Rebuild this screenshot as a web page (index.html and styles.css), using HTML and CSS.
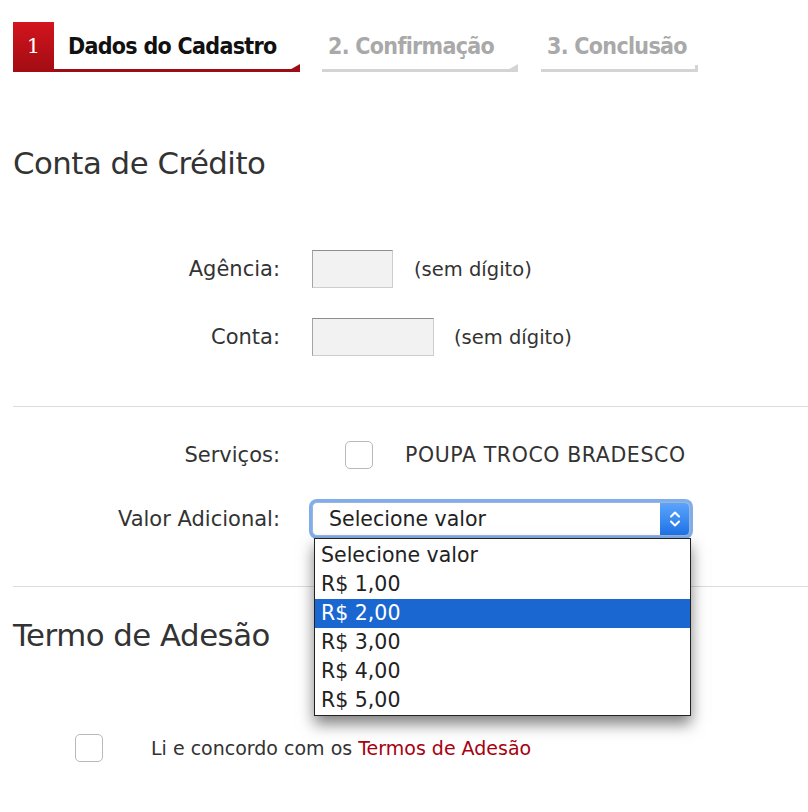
FILE: index.html
```html
<!DOCTYPE html>
<html lang="pt-BR">
<head>
    <meta charset="UTF-8">
    <title>Cadastro - Conta de Crédito</title>
    <link rel="stylesheet" href="styles.css">
</head>
<body>

<div class="steps">
    <div class="step active">
        <span class="step-num">1</span>
        <span class="step-label">Dados do Cadastro</span>
    </div>
    <div class="step second">
        <span class="step-label">2. Confirmação</span>
    </div>
    <div class="step last">
        <span class="step-label">3. Conclusão</span>
    </div>
</div>

<h2 class="section-title first">Conta de Crédito</h2>

<div class="form-block account">
    <div class="row">
        <label class="row-label">Agência:</label>
        <div class="field field-agencia"></div>
        <span class="hint">(sem dígito)</span>
    </div>
    <div class="row">
        <label class="row-label">Conta:</label>
        <div class="field field-conta"></div>
        <span class="hint">(sem dígito)</span>
    </div>
</div>

<hr class="divider">

<div class="form-block services">
    <div class="row">
        <label class="row-label">Serviços:</label>
        <span class="checkbox check-servico"></span>
        <span class="service-name">POUPA TROCO BRADESCO</span>
    </div>
    <div class="row">
        <label class="row-label">Valor Adicional:</label>
        <div class="select-wrap">
            <div class="select">
                <span>Selecione valor</span>
                <span class="select-arrow">
                    <svg width="14" height="22" viewBox="0 0 14 22"><path d="M3 8.5 L7 4.5 L11 8.5 M3 13.5 L7 17.5 L11 13.5" fill="none" stroke="#fff" stroke-width="2" stroke-linecap="round" stroke-linejoin="round"/></svg>
                </span>
            </div>
            <ul class="dropdown">
                <li>Selecione valor</li>
                <li>R$ 1,00</li>
                <li class="selected">R$ 2,00</li>
                <li>R$ 3,00</li>
                <li>R$ 4,00</li>
                <li>R$ 5,00</li>
            </ul>
        </div>
    </div>
</div>

<hr class="divider">

<h2 class="section-title second">Termo de Adesão</h2>

<div class="terms">
    <span class="checkbox"></span>
    <span class="terms-text">Li e concordo com os <a href="#">Termos de Adesão</a></span>
</div>

</body>
</html>
```

FILE: styles.css
```css
body {
    font-family: "DejaVu Sans", Verdana, sans-serif;
    color: #333;
    margin: 0;
    padding: 0 0 0 13px;
    overflow: hidden;
}

/* wizard steps */
.steps {
    display: flex;
    padding-top: 22px;
    height: 50px;
}
.step {
    display: flex;
    align-items: stretch;
}
.step.second {
    margin-left: 22px;
}
.step.last {
    margin-left: 23px;
}
.step-num {
    width: 41px;
    background: linear-gradient(#d3141d, #a20c13);
    color: #fff;
    font-family: "DejaVu Serif", serif;
    font-size: 21px;
    display: flex;
    align-items: center;
    justify-content: center;
    padding-bottom: 2px;
    box-sizing: border-box;
}
.step-label {
    font-family: "DejaVu Sans Condensed", "DejaVu Sans", sans-serif;
    font-weight: bold;
    font-size: 23px;
    letter-spacing: -0.7px;
    color: #a9a9a9;
    box-sizing: border-box;
    padding: 11px 0 0 6px;
    border-bottom: 3px solid #d4d4d4;
    position: relative;
    white-space: nowrap;
}
.step-label::after {
    content: "";
    position: absolute;
    right: 0;
    bottom: -3px;
    border-left: 14px solid transparent;
    border-bottom: 8px solid #d4d4d4;
}
.step.active .step-label {
    width: 246px;
    color: #111;
    padding-left: 14px;
    border-bottom-color: #9c0d16;
}
.step.active .step-label::after {
    border-bottom-color: #9c0d16;
}
.step.second .step-label {
    width: 196px;
}
.step.last .step-label {
    width: 157px;
}
.step.last .step-label::after {
    border-left: 3px solid #d4d4d4;
    border-bottom: 7px solid #d4d4d4;
}

/* section headings */
.section-title {
    font-weight: normal;
    font-size: 30.8px;
    line-height: 36px;
    letter-spacing: -0.5px;
    color: #333;
    margin: 0;
}
.section-title.first {
    margin-top: 73px;
}
.section-title.second {
    margin-top: 30px;
}

/* form rows */
.form-block {
    display: flex;
    flex-direction: column;
}
.form-block.account {
    gap: 30px;
    padding: 69px 0 50px;
}
.form-block.services {
    gap: 26px;
    padding: 29px 0 48px;
}
.row {
    display: flex;
    align-items: center;
    height: 38px;
}
.row-label {
    width: 267px;
    text-align: right;
    margin-right: 32px;
    font-size: 21px;
}
.field {
    height: 36px;
    background: #f2f2f2;
    border: 1px solid #cdcdcd;
    border-top-color: #8e8e8e;
    border-left-color: #a4a4a4;
}
.field-agencia {
    width: 79px;
    margin-right: 21px;
}
.field-conta {
    width: 120px;
    margin-right: 20px;
}
.hint {
    font-size: 19.5px;
    color: #333;
}
.divider {
    border: 0;
    border-top: 1px solid #dcdcdc;
    margin: 0;
}
.checkbox {
    width: 26px;
    height: 26px;
    border: 1px solid #b9b9b9;
    border-radius: 5px;
    background: #fff;
    display: inline-block;
}
.check-servico {
    margin-left: 33px;
    margin-right: 32px;
}
.service-name {
    font-size: 20.5px;
    letter-spacing: 0.6px;
}

/* select with open list */
.select-wrap {
    position: relative;
}
.select {
    width: 378px;
    height: 34px;
    box-sizing: border-box;
    border: 1px solid #9db5d8;
    border-radius: 5px;
    box-shadow: 0 0 0 3px #80aeea;
    background: #fff;
    display: flex;
    align-items: center;
    justify-content: space-between;
    padding-left: 16px;
    font-size: 20.5px;
    color: #222;
}
.select-arrow {
    width: 29px;
    height: 32px;
    background: linear-gradient(#5ba4fb, #1f73e7);
    border-radius: 0 4px 4px 0;
    display: flex;
    align-items: center;
    justify-content: center;
}
.dropdown {
    position: absolute;
    left: 2px;
    top: 36px;
    width: 375px;
    margin: 0;
    padding: 2px 0 0;
    list-style: none;
    background: #fff;
    border: 1px solid #222;
    box-shadow: 0 8px 14px rgba(0, 0, 0, 0.5);
    font-size: 20.5px;
    color: #222;
    z-index: 2;
}
.dropdown li {
    height: 29px;
    line-height: 29px;
    padding-left: 6px;
}
.dropdown li.selected {
    background: #1a67d2;
    color: #fff;
}

/* terms */
.terms {
    display: flex;
    align-items: center;
    margin-top: 81px;
    padding-left: 62px;
    font-size: 19px;
}
.terms .checkbox {
    margin-right: 48px;
}
.terms a {
    color: #a8000f;
    text-decoration: none;
}
```
